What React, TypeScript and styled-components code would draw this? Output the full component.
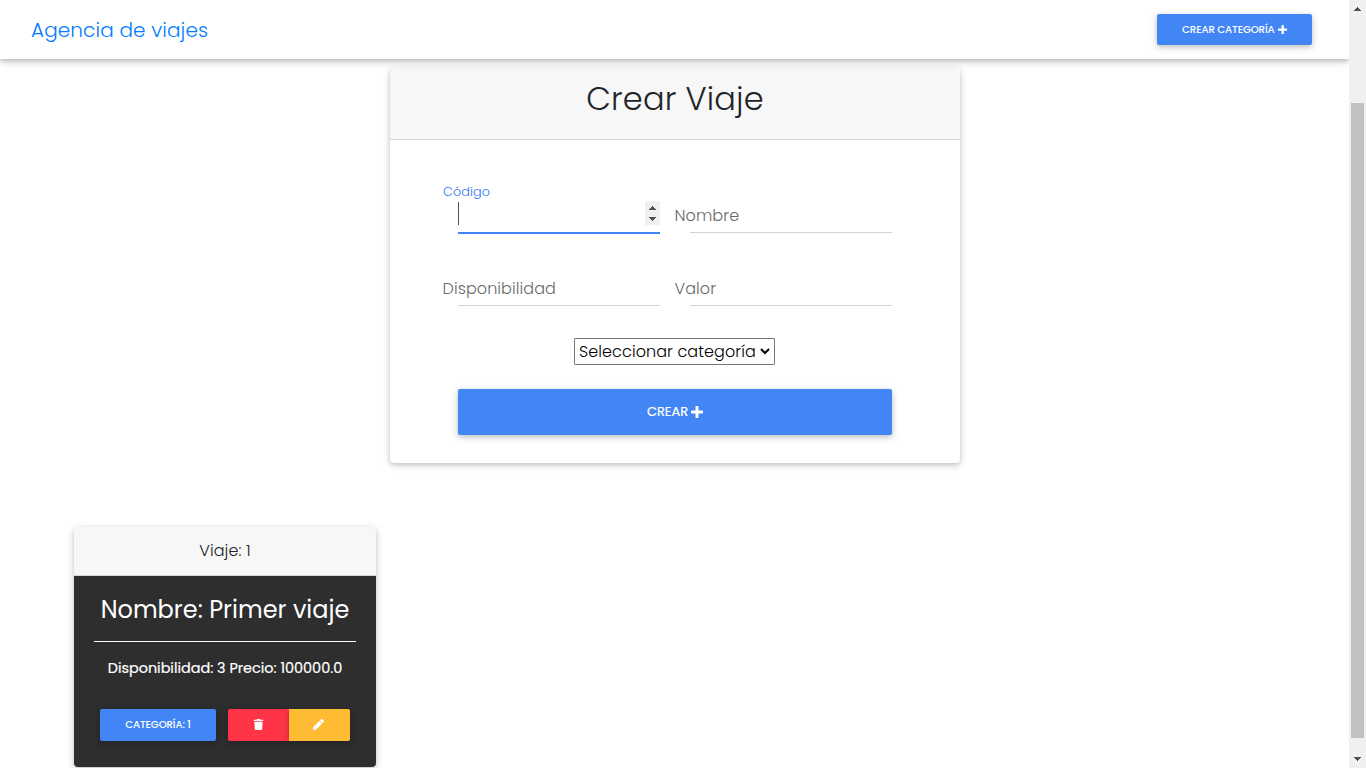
import React from "react";
import styled, { createGlobalStyle } from "styled-components";
import { FaTrash, FaPen } from "react-icons/fa";

const depth = "0 2px 5px 0 rgba(0,0,0,.16), 0 2px 10px 0 rgba(0,0,0,.12)";

const GlobalStyle = createGlobalStyle`
  * { box-sizing: border-box; }
  body {
    margin: 0;
    overflow: hidden;
    background: #fff;
    color: #212529;
    font-family: Poppins, Inter, "Open Sans", sans-serif;
    font-weight: 300;
    font-size: 16px;
    line-height: 1.5;
  }
`;

const Screen = styled.div`
  display: flex;
  width: 1366px;
  height: 768px;
  overflow: hidden;
`;

const Page = styled.div`
  display: flex;
  flex-direction: column;
  width: 1349px;
  height: 768px;
  overflow: hidden;
`;

const Text = styled.span<{ $spacing?: number }>`
  white-space: nowrap;
  letter-spacing: ${(p) => p.$spacing ?? 0}px;
`;

const Navbar = styled.nav`
  position: relative;
  z-index: 1;
  flex: none;
  display: flex;
  align-items: center;
  justify-content: space-between;
  height: 59px;
  padding: 0 37px 0 31px;
  background: #fff;
  box-shadow: 0 2px 5px 0 rgba(0, 0, 0, 0.2), 0 2px 10px 0 rgba(0, 0, 0, 0.14);
`;

const Brand = styled.a`
  color: #007bff;
  font-size: 20px;
  line-height: 30px;
  margin-bottom: -1px;
`;

const Button = styled.button<{ $color: string; $width: number; $height: number; $large?: boolean; $side?: "left" | "right" }>`
  display: flex;
  align-items: center;
  justify-content: center;
  gap: 3px;
  width: ${(p) => p.$width}px;
  height: ${(p) => p.$height}px;
  padding: 0 0 ${(p) => (p.$height % 2 ? 0 : 1)}px;
  border: 0;
  border-radius: ${(p) => (p.$side === "left" ? "2px 0 0 2px" : p.$side === "right" ? "0 2px 2px 0" : "2px")};
  background: ${(p) => p.$color};
  color: #fff;
  font-family: inherit;
  font-size: ${(p) => (p.$large ? 12.96 : 10.24)}px;
  font-weight: ${(p) => (p.$large ? 400 : 500)};
  -webkit-text-stroke: ${(p) => (p.$large ? "0.2px #fff" : "0")};
  text-transform: uppercase;
  box-shadow: ${depth};
`;

const NavAction = styled.div`
  display: flex;
`;

const Card = styled.section<{ $width: number; $height: number }>`
  flex: none;
  display: flex;
  flex-direction: column;
  width: ${(p) => p.$width}px;
  height: ${(p) => p.$height}px;
  border-radius: 4px;
  overflow: hidden;
  background: #fff;
  box-shadow: ${depth};
`;

const FormArea = styled.main`
  display: flex;
  justify-content: center;
  padding: 9px 0 64px 1px;
`;

const CardHeader = styled.header<{ $height: number }>`
  display: flex;
  flex: none;
  align-items: center;
  justify-content: center;
  height: ${(p) => p.$height}px;
  background: #f7f7f7;
  border-bottom: 1px solid #d7d7d7;
`;

const FormTitle = styled.h2`
  margin: 0 0 9px;
  font-size: 32px;
  font-weight: 300;
  line-height: 38px;
`;

const Form = styled.form`
  display: flex;
  flex-direction: column;
  align-items: center;
  padding-top: 55px;
`;

const Fields = styled.div`
  display: grid;
  grid-template-columns: 202px 202px;
  gap: 35px 30px;
  margin-bottom: 32px;
`;

const Field = styled.div<{ $active?: boolean }>`
  position: relative;
  display: flex;
  align-items: center;
  height: 38px;
  padding-bottom: 1px;
  border-bottom: 1px solid ${(p) => (p.$active ? "#4285f4" : "#ced4da")};
  box-shadow: ${(p) => (p.$active ? "0 1px 0 0 #4285f4" : "none")};
`;

const Label = styled.label`
  margin: 5px 0 0 -15.5px;
  color: #6a6a6a;
`;

const FloatingLabel = styled.label`
  position: absolute;
  left: -15px;
  top: -13px;
  color: #2f76f0;
  font-size: 12.8px;
  line-height: 20px;
`;

const Caret = styled.span`
  width: 1px;
  height: 23px;
  background: #495057;
`;

const Spinner = styled.span`
  display: flex;
  flex-direction: column;
  align-items: center;
  justify-content: space-between;
  width: 15px;
  height: 24px;
  margin-left: auto;
  padding: 5px 0 4px;
  background: #f0f0f0;
`;

const Arrow = styled.svg`
  display: block;
  fill: #505050;
`;

const Select = styled.div`
  display: flex;
  align-items: center;
  justify-content: space-between;
  width: 201px;
  height: 27px;
  margin: 0 1px 24px 0;
  padding: 0 4px 0 4px;
  border: 1px solid #767676;
  border-radius: 1px;
  color: #000;
`;

const Trips = styled.div`
  display: flex;
  padding-left: 74px;
`;

const TripBody = styled.div`
  flex: 1;
  display: flex;
  flex-direction: column;
  align-items: center;
  padding: 19px 20px 0;
  background: #2e2e2e;
  color: #fff;
`;

const TripTitle = styled.h4`
  margin: 0;
  font-size: 24px;
  font-weight: 400;
  line-height: 29px;
`;

const Divider = styled.hr`
  width: 100%;
  height: 1px;
  margin: 17px 0 15px;
  border: 0;
  background: #fff;
`;

const TripInfo = styled.p`
  margin: 0 0 30px;
  font-size: 14.4px;
  font-weight: 400;
  line-height: 22px;
  -webkit-text-stroke: 0.2px #fff;
`;

const Actions = styled.div`
  display: flex;
  gap: 12px;
`;

const ButtonGroup = styled.div`
  display: flex;
`;

const PenIcon = styled(FaPen)`
  margin-right: 2px;
`;

const Scrollbar = styled.aside`
  display: flex;
  flex-direction: column;
  align-items: center;
  width: 17px;
  height: 768px;
  padding: 7px 0;
  background: #f0f0f0;
`;

const Thumb = styled.div`
  width: 13px;
  height: 635px;
  margin: 92px 0 19px;
  background: #c1c1c1;
`;

const Triangle = ({ down = false }: { down?: boolean }) => (
  <Arrow width="7" height="4" viewBox="0 0 7 4" shapeRendering="crispEdges">
    <path d={down ? "M0 0h7v1H6v1H5v1H4v1H3V3H2V2H1V1H0z" : "M0 4h7V3H6V2H5V1H4V0H3v1H2v1H1v1H0z"} />
  </Arrow>
);

const Plus = ({ size }: { size: number }) => (
  <svg width={size} height={size} viewBox="0 0 12 12" fill="currentColor">
    <rect x="4.5" y="0" width="3" height="12" rx="0.8" />
    <rect x="0" y="4.5" width="12" height="3" rx="0.8" />
  </svg>
);

export default function App() {
  return (
    <Screen>
      <GlobalStyle />
      <Page>
        <Navbar>
          <Brand><Text $spacing={0.12}>Agencia de viajes</Text></Brand>
          <NavAction>
            <Button $color="#4285f4" $width={155} $height={31}>
              <Text $spacing={-0.13}>Crear categoría</Text>
              <Plus size={9.4} />
            </Button>
          </NavAction>
        </Navbar>
        <FormArea>
          <Card $width={570} $height={395}>
            <CardHeader $height={72}>
              <FormTitle><Text $spacing={0.2}>Crear Viaje</Text></FormTitle>
            </CardHeader>
            <Form>
              <Fields>
                <Field $active>
                  <FloatingLabel><Text $spacing={0.1}>Código</Text></FloatingLabel>
                  <Caret />
                  <Spinner>
                    <Triangle />
                    <Triangle down />
                  </Spinner>
                </Field>
                <Field><Label><Text $spacing={0.09}>Nombre</Text></Label></Field>
                <Field><Label><Text $spacing={0.09}>Disponibilidad</Text></Label></Field>
                <Field><Label><Text $spacing={0.09}>Valor</Text></Label></Field>
              </Fields>
              <Select>
                <Text $spacing={0.09}>Seleccionar categoría</Text>
                <svg width="10" height="7" viewBox="0 0 10 7" fill="none" stroke="#000" strokeWidth="2">
                  <path d="M1 1l4 4 4-4" />
                </svg>
              </Select>
              <Button type="button" $color="#4285f4" $width={434} $height={46} $large>
                <Text>Crear</Text>
                <Plus size={12} />
              </Button>
            </Form>
          </Card>
        </FormArea>
        <Trips>
          <Card $width={302} $height={240}>
            <CardHeader $height={49}><Text $spacing={0.09}>Viaje: 1</Text></CardHeader>
            <TripBody>
              <TripTitle><Text>Nombre: Primer viaje</Text></TripTitle>
              <Divider />
              <TripInfo><Text>Disponibilidad: 3 Precio: 100000.0</Text></TripInfo>
              <Actions>
                <Button $color="#4285f4" $width={116} $height={32}><Text $spacing={-0.13}>Categoría: 1</Text></Button>
                <ButtonGroup>
                  <Button $color="#ff3547" $width={61} $height={32} $side="left"><FaTrash size={11} /></Button>
                  <Button $color="#ffbb33" $width={61} $height={32} $side="right"><PenIcon size={11} /></Button>
                </ButtonGroup>
              </Actions>
            </TripBody>
          </Card>
        </Trips>
      </Page>
      <Scrollbar>
        <Triangle />
        <Thumb />
        <Triangle down />
      </Scrollbar>
    </Screen>
  );
}
